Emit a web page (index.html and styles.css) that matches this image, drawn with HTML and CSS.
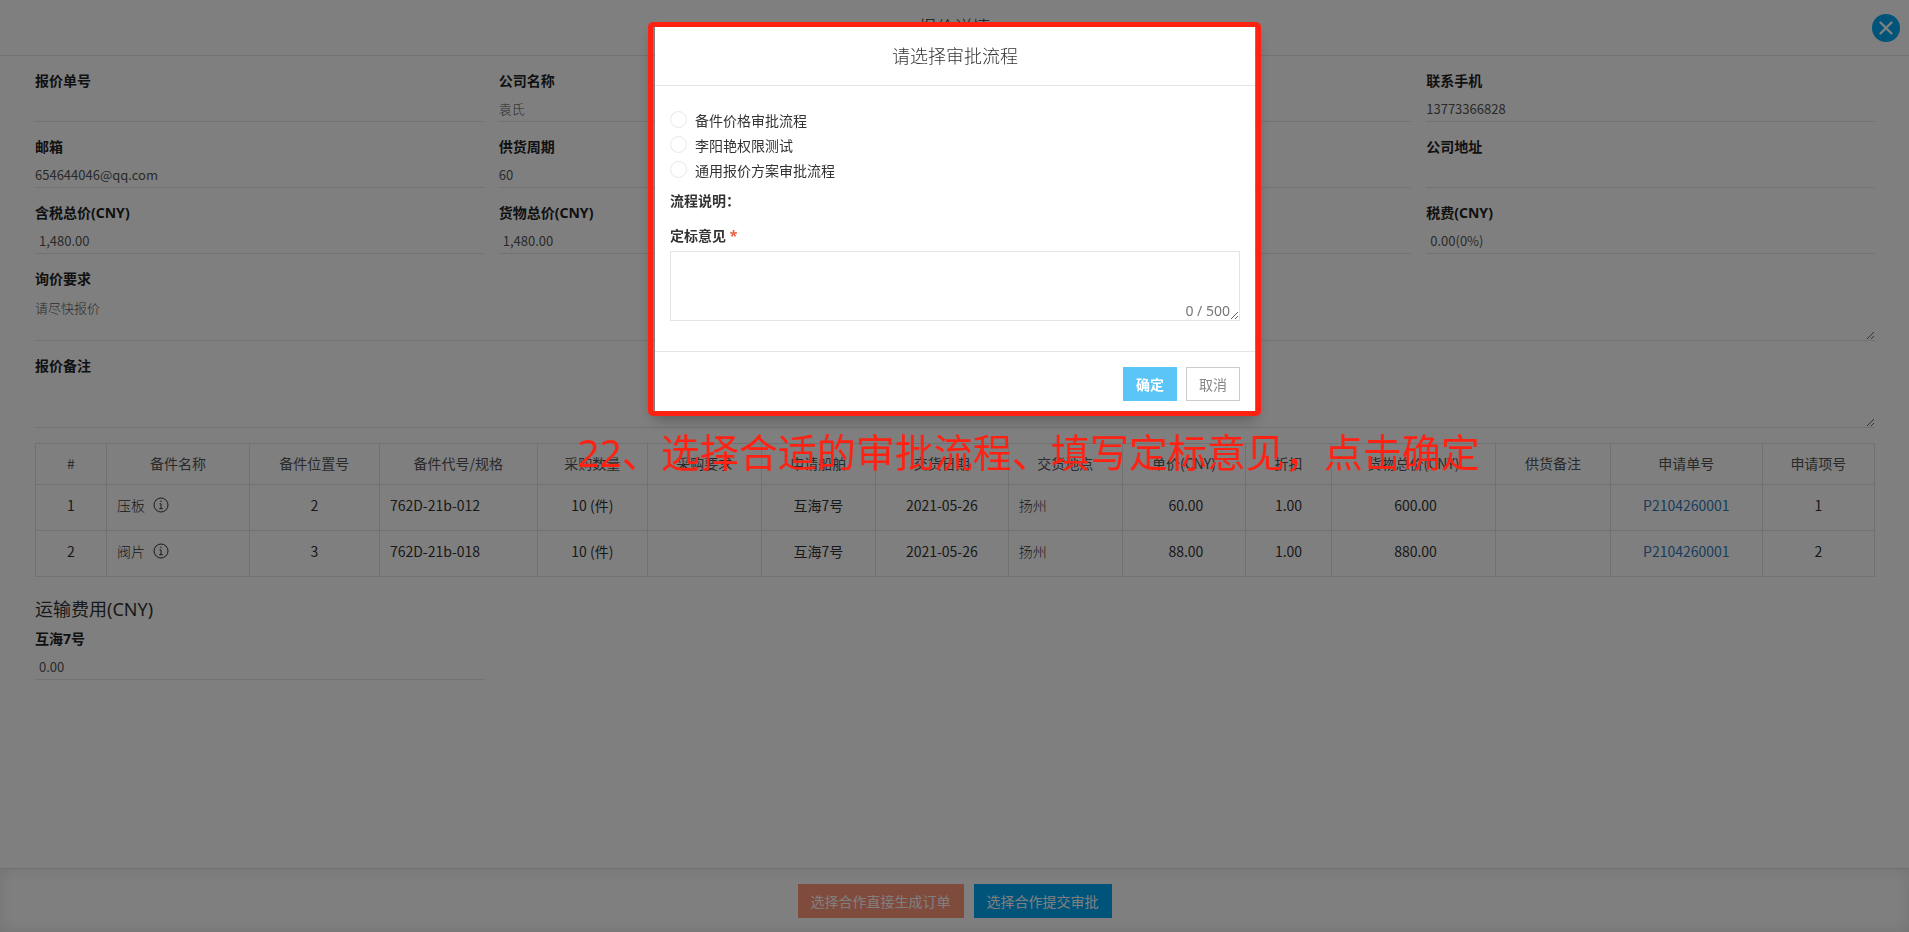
FILE: index.html
```html
<!DOCTYPE html>
<html lang="zh-CN">
<head>
<meta charset="utf-8">
<title>报价详情</title>
<link rel="stylesheet" href="styles.css">
</head>
<body>
<div class="page">
  <header class="page-header">
    <h1 class="page-title">报价详情</h1>
    <button class="close" type="button" aria-label="关闭">
      <svg viewBox="0 0 28 28" width="28" height="28"><path d="M8.5 8.5 L19.5 19.5 M19.5 8.5 L8.5 19.5" fill="none" stroke="#fff" stroke-width="2.4" stroke-linecap="round"/></svg>
    </button>
  </header>
  <main class="content">
    <div class="fields">
      <div class="field"><label for="f1">报价单号</label><input id="f1" type="text" readonly></div>
      <div class="field"><label for="f2">公司名称</label><input id="f2" class="muted" type="text" value="袁氏" readonly></div>
      <div class="field blank"></div>
      <div class="field"><label for="f4">联系手机</label><input id="f4" type="text" value="13773366828" readonly></div>
      <div class="field"><label for="f5">邮箱</label><input id="f5" type="text" value="654644046@qq.com" readonly></div>
      <div class="field"><label for="f6">供货周期</label><input id="f6" type="text" value="60" readonly></div>
      <div class="field blank"></div>
      <div class="field"><label for="f8">公司地址</label><input id="f8" type="text" readonly></div>
      <div class="field"><label for="f9">含税总价(CNY)</label><input id="f9" class="money" type="text" value="1,480.00" readonly></div>
      <div class="field"><label for="f10">货物总价(CNY)</label><input id="f10" class="money" type="text" value="1,480.00" readonly></div>
      <div class="field blank"></div>
      <div class="field"><label for="f12">税费(CNY)</label><input id="f12" class="money" type="text" value="0.00(0%)" readonly></div>
      <div class="field wide"><label for="f13">询价要求</label><textarea id="f13" class="muted" readonly>请尽快报价</textarea></div>
      <div class="field wide"><label for="f14">报价备注</label><textarea id="f14" readonly></textarea></div>
    </div>
    <table class="items">
      <colgroup>
        <col style="width:3.86%"><col style="width:7.77%"><col style="width:7.07%"><col style="width:8.59%"><col style="width:5.98%">
        <col style="width:6.2%"><col style="width:6.2%"><col style="width:7.23%"><col style="width:6.2%"><col style="width:6.7%">
        <col style="width:4.68%"><col style="width:8.91%"><col style="width:6.25%"><col style="width:8.26%"><col style="width:6.1%">
      </colgroup>
      <thead>
        <tr><th>#</th><th>备件名称</th><th>备件位置号</th><th>备件代号/规格</th><th>采购数量</th><th>采购要求</th><th>申请船舶</th><th>交货日期</th><th>交货地点</th><th>单价(CNY)</th><th>折扣</th><th>货物总价(CNY)</th><th>供货备注</th><th>申请单号</th><th>申请项号</th></tr>
      </thead>
      <tbody>
        <tr><td>1</td><td class="left"><span class="name">压板<svg class="info" viewBox="0 0 16 16"><circle cx="8" cy="8" r="7"/><path d="M8 3.6v1.5M6.6 6.8H8v4.8M6.2 11.7h3.6"/></svg></span></td><td>2</td><td class="left">762D-21b-012</td><td>10 (件)</td><td></td><td>互海7号</td><td>2021-05-26</td><td class="left light">扬州</td><td class="price">60.00</td><td>1.00</td><td class="price">600.00</td><td></td><td><a href="#">P2104260001</a></td><td>1</td></tr>
        <tr><td>2</td><td class="left"><span class="name">阀片<svg class="info" viewBox="0 0 16 16"><circle cx="8" cy="8" r="7"/><path d="M8 3.6v1.5M6.6 6.8H8v4.8M6.2 11.7h3.6"/></svg></span></td><td>3</td><td class="left">762D-21b-018</td><td>10 (件)</td><td></td><td>互海7号</td><td>2021-05-26</td><td class="left light">扬州</td><td class="price">88.00</td><td>1.00</td><td class="price">880.00</td><td></td><td><a href="#">P2104260001</a></td><td>2</td></tr>
      </tbody>
    </table>
    <h2 class="section-title">运输费用(CNY)</h2>
    <div class="fields">
      <div class="field"><label for="f15">互海7号</label><input id="f15" class="money" type="text" value="0.00" readonly></div>
    </div>
  </main>
  <footer class="page-footer">
    <button class="btn danger" type="button">选择合作直接生成订单</button>
    <button class="btn primary" type="button">选择合作提交审批</button>
  </footer>
</div>

<div class="overlay">
  <div class="callout">
    <form class="modal" role="dialog" aria-labelledby="modal-title">
      <h2 class="modal-title" id="modal-title">请选择审批流程</h2>
      <div class="modal-body">
        <label class="option"><input type="radio" name="flow">备件价格审批流程</label>
        <label class="option"><input type="radio" name="flow">李阳艳权限测试</label>
        <label class="option"><input type="radio" name="flow">通用报价方案审批流程</label>
        <p class="flow-note">流程说明：</p>
        <label class="opinion-label" for="opinion">定标意见 <span class="required">*</span></label>
        <div class="opinion">
          <textarea id="opinion"></textarea>
          <span class="counter">0 / 500</span>
        </div>
      </div>
      <div class="modal-footer">
        <button class="btn confirm" type="button">确定</button>
        <button class="btn cancel" type="button">取消</button>
      </div>
    </form>
  </div>
  <p class="caption">22、选择合适的审批流程、填写定标意见，点击确定</p>
</div>
</body>
</html>
```
FILE: styles.css
```css
* { box-sizing: border-box; }
body {
  margin: 0;
  font: 14px/20px "Noto Sans CJK SC", sans-serif;
  color: #333;
  background: #fff;
}
h1, h2, p { margin: 0; font-weight: 400; }
button, input, textarea { font: inherit; color: inherit; }

.page { min-height: 100vh; display: flex; flex-direction: column; }
.page-header {
  position: relative;
  height: 56px;
  border-bottom: 1px solid #e5e5e5;
  display: flex;
  align-items: center;
  justify-content: center;
}
.page-title { padding-bottom: 4px; font-size: 18px; line-height: 26px; font-weight: 300; }
.close {
  position: absolute;
  right: 9px;
  top: 14px;
  width: 28px;
  height: 28px;
  padding: 0;
  border: 0;
  border-radius: 50%;
  background: #00a8f4;
}
.close svg { display: block; }

.content { flex: 1; padding: 0 34px 0 35px; }
.fields {
  display: grid;
  grid-template-columns: repeat(4, 1fr);
  column-gap: 15px;
}
.field { display: flex; flex-direction: column; padding-top: 15px; }
.field label {
  height: 20px;
  font-family: "Noto Sans", "Noto Sans CJK SC", sans-serif;
  font-weight: 700;
  color: #222;
}
.field input,
.field textarea {
  width: 100%;
  padding: 0;
  border: 0;
  border-bottom: 1px solid #e5e5e5;
  background: transparent;
  font-size: 13px;
  color: #555;
  outline: 0;
}
.field input { height: 31px; padding-top: 5px; }
.field textarea { display: block; height: 52px; padding-top: 9px; resize: vertical; }
.field input.money { padding-left: 4px; }
.field .muted { color: #555; font-weight: 300; }
.blank { border-bottom: 1px solid #e5e5e5; }
.wide { grid-column: 1 / -1; }

.items {
  width: 100%;
  margin-top: 15px;
  border-collapse: collapse;
  table-layout: fixed;
}
.items th, .items td {
  border: 1px solid #e2e2e2;
  padding: 0;
  text-align: center;
  white-space: nowrap;
}
.items th { height: 41px; padding-bottom: 2px; font-weight: 400; color: #555; }
.items td { height: 46px; padding-bottom: 6px; }
.items .left { text-align: left; padding-left: 10px; }
.items .light { font-weight: 300; }
.items .price { padding-left: 4px; }
.items a { color: #337ab7; text-decoration: none; }
.name { display: flex; align-items: center; gap: 8px; font-weight: 300; }
.info { width: 16px; height: 16px; fill: none; stroke: #333; stroke-width: 1; }

.section-title {
  margin-top: 19px;
  font-size: 18px;
  line-height: 26px;
  font-family: "Noto Sans", "Noto Sans CJK SC", sans-serif;
}
.section-title + .fields .field { padding-top: 7px; }

.page-footer {
  height: 64px;
  border-top: 1px solid #e0e0e0;
  box-shadow: inset 0 0 16px rgba(0, 0, 0, .1);
  display: flex;
  align-items: center;
  justify-content: center;
  gap: 10px;
}
.btn {
  height: 34px;
  padding: 0 13px;
  border: 0;
  font-size: 14px;
  line-height: 20px;
  color: #fff;
}
.danger { background: #ff977b; }
.primary { background: #00a8f4; }

.overlay {
  position: fixed;
  inset: 0;
  background: rgba(0, 0, 0, .5);
  display: flex;
  flex-direction: column;
  align-items: center;
  padding-top: 22px;
}
.callout {
  width: 613px;
  border: 5px solid #ff2213;
  border-radius: 5px;
  padding: 0 1px 0 2px;
  box-shadow: 0 8px 14px -5px rgba(0, 0, 0, .3);
}
.modal { background: #fff; }
.modal-title {
  padding: 15px 0 17px;
  border-bottom: 1px solid #e5e5e5;
  font-size: 18px;
  line-height: 26px;
  font-weight: 300;
  text-align: center;
  color: #333;
}
.modal-body { padding: 21px 15px 30px; }
.option { display: flex; align-items: center; gap: 8px; height: 25px; }
.option input {
  appearance: none;
  width: 17px;
  height: 17px;
  margin: 0;
  border: 1px solid #e8e8e8;
  border-radius: 50%;
}
.flow-note { margin-top: 8px; font-weight: 700; }
.opinion-label {
  display: block;
  margin-top: 16px;
  font-family: "Noto Sans", "Noto Sans CJK SC", sans-serif;
  font-weight: 700;
}
.required { color: #ed5c3f; }
.opinion { position: relative; margin-top: 5px; }
.opinion textarea {
  display: block;
  width: 100%;
  height: 70px;
  border: 1px solid #e2e5e8;
  resize: vertical;
  outline: 0;
}
.counter {
  position: absolute;
  right: 10px;
  bottom: 0;
  font-family: "Noto Sans", sans-serif;
  color: #777;
}
.modal-footer {
  display: flex;
  justify-content: flex-end;
  gap: 9px;
  padding: 15px 15px 10px;
  border-top: 1px solid #e5e5e5;
}
.confirm { background: #5bc5f7; font-weight: 700; }
.cancel { padding: 0 12px; background: #fff; border: 1px solid #ccc; color: #888; }
.caption {
  margin-top: 8px;
  padding-left: 148px;
  font-family: "Noto Sans", "Noto Sans CJK SC", sans-serif;
  font-size: 39px;
  line-height: 56px;
  white-space: nowrap;
  color: #ff2213;
}
```
